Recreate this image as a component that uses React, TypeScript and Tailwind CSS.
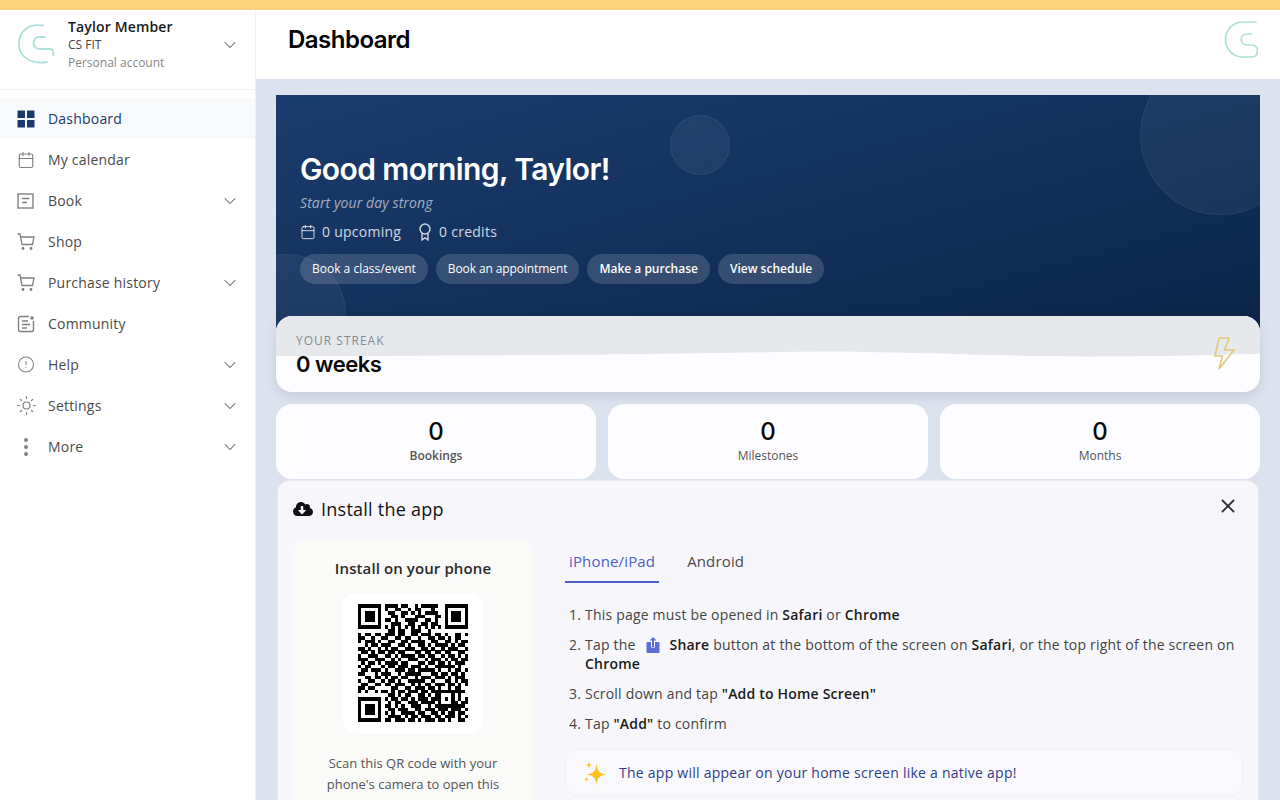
import type { ReactNode } from "react";
import { Calendar, ChevronDown, CircleAlert, EllipsisVertical, Sun, X } from "lucide-react";
import { FaCloudDownloadAlt } from "react-icons/fa";

const HEADING = "font-['Inter',sans-serif]";

function CartIcon() {
  return (
    <svg width="18" height="18" viewBox="0 0 18 18" fill="none" stroke="currentColor" strokeWidth="1.3">
      <path d="M0.500 1H3L5 11.500H15.500L17 4H3.500" />
      <circle cx="6" cy="15.500" r="0.800" fill="currentColor" />
      <circle cx="14" cy="15.500" r="0.800" fill="currentColor" />
    </svg>
  );
}

const NAV: { label: string; icon: ReactNode; chevron?: boolean; active?: boolean }[] = [
  {
    label: "Dashboard",
    active: true,
    icon: (
      <svg width="18" height="18" viewBox="0 0 18 18" fill="#1a3a6b">
        <rect x="0.500" y="0.500" width="7.500" height="7.500" rx="0.500" />
        <rect x="10" y="0.500" width="7.500" height="7.500" rx="0.500" />
        <rect x="0.500" y="10" width="7.500" height="7.500" rx="0.500" />
        <rect x="10" y="10" width="7.500" height="7.500" rx="0.500" />
      </svg>
    ),
  },
  { label: "My calendar", icon: <Calendar size={18} strokeWidth={1.5} /> },
  {
    label: "Book",
    chevron: true,
    icon: (
      <svg width="18" height="18" viewBox="0 0 18 18" fill="none" stroke="currentColor" strokeWidth="1.4">
        <rect x="1" y="2" width="15" height="14" />
        <path d="M5 6.500H12.500M5 10.500H10" />
      </svg>
    ),
  },
  { label: "Shop", icon: <CartIcon /> },
  { label: "Purchase history", chevron: true, icon: <CartIcon /> },
  {
    label: "Community",
    icon: (
      <svg width="18" height="18" viewBox="0 0 18 18" fill="none" stroke="currentColor" strokeWidth="1.4">
        <path d="M12 1.500H3.500A2 2 0 0 0 1.500 3.500V14.500A2 2 0 0 0 3.500 16.500H14.500A2 2 0 0 0 16.500 14.500V6" />
        <path d="M5 6H11M5 9.500H13M5 13H10" />
        <circle cx="15" cy="3" r="1.800" fill="currentColor" stroke="none" />
      </svg>
    ),
  },
  { label: "Help", chevron: true, icon: <CircleAlert size={19} strokeWidth={1.4} /> },
  { label: "Settings", chevron: true, icon: <Sun size={21} strokeWidth={1.4} className="shrink-0" /> },
  { label: "More", chevron: true, icon: <EllipsisVertical size={24} strokeWidth={2} className="shrink-0" /> },
];

// eyeballed from the picture, finders and the alignment block get drawn on top
const QR_ROWS = [
  "000000001111011001011111000000000",
  "000000001001100101100010000000000",
  "000000000110011010101111000000000",
  "000000000011010001110001100000000",
  "000000001101001111001101000000000",
  "000000000011100110011011000000000",
  "000000001010101010101010100000000",
  "000000000110110011100100000000000",
  "101101101110110011011101101001101",
  "110010011001101100100110110101100",
  "101110100110011011110011001101011",
  "001011011100110100110101111010110",
  "110100101011001110011010010111001",
  "011010110110110001101101101100110",
  "100111001101011110110110010110101",
  "111001110010100111001011101011011",
  "010110101111011000110110110101110",
  "101100010110111011101001111110100",
  "011011101001110110111110100101101",
  "110001011100101111100011011011010",
  "001101101011011001011101110101110",
  "100110010110100111110010001101011",
  "011001101101110010101101110110101",
  "110110000011001101110110100101100",
  "101001011010110111011011000001110",
  "000000000110101100110101000000100",
  "000000001011011010111011000000101",
  "000000000101100111011110000001011",
  "000000001101010011100101000001110",
  "000000000110111001101110111011101",
  "000000001010011110110011010110110",
  "000000000111101011011101101110101",
  "000000001101110110101110110100110",
];

function Finder({ x, y }: { x: number; y: number }) {
  return (
    <>
      <path d={`M${x} ${y}h7v7h-7zM${x + 1} ${y + 1}v5h5v-5z`} fillRule="evenodd" />
      <rect x={x + 2} y={y + 2} width="3" height="3" />
    </>
  );
}

function QrCode() {
  return (
    <svg width="110" height="118" viewBox="0 0 33 33" preserveAspectRatio="none" shapeRendering="crispEdges">
      {QR_ROWS.map((row, y) =>
        row.split("").map((c, x) => (c === "1" ? <rect key={`${x}-${y}`} x={x} y={y} width="1.02" height="1.02" /> : null)),
      )}
      <Finder x={0} y={0} />
      <Finder x={26} y={0} />
      <Finder x={0} y={26} />
      <rect x="24" y="24" width="5" height="5" fill="#000" />
      <rect x="25" y="25" width="3" height="3" fill="#fff" />
      <rect x="26" y="26" width="1" height="1" fill="#000" />
    </svg>
  );
}

function SidebarLogo() {
  return (
    <svg width="38" height="42" viewBox="0 0 38 42" fill="none" stroke="#aee1db" strokeWidth="1.800" strokeLinecap="round">
      <path d="M25 1.500C10 -1 0.900 8 0.900 20S12 41 29 38" />
      <path d="M27 13H21C14 13 13 25 22 25H32C35 25 36.500 28 35 31" />
    </svg>
  );
}

function HeaderLogo() {
  return (
    <svg width="36" height="38" viewBox="0 0 36 38" fill="none" stroke="#aee1db" strokeWidth="1.700" strokeLinecap="round">
      <path d="M32 1H19C9 1 1.500 9 1.500 18.500S9 36 19 36H28C35 36 35.500 24 28 24H23C15.500 24 15 13 23 13H27" />
    </svg>
  );
}

function Sparkles() {
  return (
    <svg width="24" height="24" viewBox="0 0 24 24" fill="#fbbf24">
      <path d="M13.500 3C14.500 10 16 12.500 23.500 13.500C16 14.500 14.500 17 13.500 24C12.500 17 11 14.500 3.500 13.500C11 12.500 12.500 10 13.500 3Z" />
      <path d="M6 0.500C6.400 3 7 3.600 9 4C7 4.400 6.400 5 6 7.500C5.600 5 5 4.400 3 4C5 3.600 5.600 3 6 0.500Z" />
      <path d="M3.500 15.500C3.800 17.500 4.200 18 6 18.300C4.200 18.600 3.800 19 3.500 21C3.200 19 2.800 18.600 1 18.300C2.800 18 3.200 17.500 3.500 15.500Z" />
    </svg>
  );
}

function Sidebar() {
  return (
    <aside className="w-[256px] shrink-0 border-r border-[#eef0f3] bg-white">
      <div className="flex h-[80px] items-center border-b border-[#f1f2f4] pb-[10px] pl-[18px] pr-[15px]">
        <SidebarLogo />
        <div className="ml-3 flex-1">
          <div className="text-sm font-semibold leading-[18px] tracking-[0.15px] text-[#1a1a1a]">Taylor Member</div>
          <div className="text-xs leading-[18px] text-[#444]">CS FIT</div>
          <div className="text-xs leading-[18px] text-[#888]">Personal account</div>
        </div>
        <ChevronDown size={20} strokeWidth={1.25} className="text-[#666]" />
      </div>
      <nav className="mt-2">
        {NAV.map((item) => (
          <div
            key={item.label}
            className={`flex h-[41px] items-center pr-[15px] ${item.active ? "bg-[#f7f9fb] text-[#1a3a6b]" : "text-[#4b4b4b]"}`}
          >
            <span className={`ml-[17px] mr-[13px] flex w-[18px] justify-center ${item.active ? "" : "text-[#808080]"}`}>
              {item.icon}
            </span>
            <span className="flex-1 text-sm tracking-[0.2px]">{item.label}</span>
            {item.chevron && <ChevronDown size={20} strokeWidth={1.25} className="text-[#666]" />}
          </div>
        ))}
      </nav>
    </aside>
  );
}

function Hero() {
  return (
    <section className="relative h-[245px] overflow-hidden bg-[linear-gradient(165deg,#1a3c6e,#0c2548)] px-6 pt-[52px] text-white">
      <div className="absolute -right-10 -top-10 size-40 rounded-full border border-white/5 bg-white/5" />
      <div className="absolute left-[394px] top-5 size-[60px] rounded-full border border-white/5 bg-white/5" />
      <div className="absolute -left-[50px] top-[159px] size-[120px] rounded-full border border-white/5 bg-white/5" />
      <div className="relative">
        <h2 className={`${HEADING} text-[30px] font-semibold leading-[44px] tracking-[-0.6px]`}>Good morning, Taylor!</h2>
        <p className="text-sm italic leading-[24px] tracking-[0.1px] text-white/60">Start your day strong</p>
        <div className="mt-[5px] flex items-center gap-4 text-sm leading-[24px] tracking-[0.25px] text-white/80">
          <span className="flex items-center gap-1.5">
            <Calendar size={16} strokeWidth={1.5} />0 upcoming
          </span>
          <span className="flex items-center gap-1.5">
            <svg width="16" height="18" viewBox="0 0 16 18" fill="none" stroke="currentColor" strokeWidth="1.400">
              <circle cx="8" cy="6" r="5" />
              <path d="M5 10.500V17L8 14.800L11 17V10.500" />
            </svg>
            0 credits
          </span>
        </div>
        <div className="mt-[10px] flex gap-2 text-xs">
          <button className="h-[30px] rounded-full bg-white/15 px-3">Book a class/event</button>
          <button className="h-[30px] rounded-full bg-white/15 px-3 tracking-[-0.1px]">Book an appointment</button>
          <button className="h-[30px] rounded-full bg-white/15 px-3 font-semibold">Make a purchase</button>
          <button className="h-[30px] rounded-full bg-white/15 px-3 font-semibold">View schedule</button>
        </div>
      </div>
    </section>
  );
}

function Streak() {
  return (
    <section className="relative z-10 -mt-6 flex h-[76px] items-center justify-between overflow-hidden rounded-2xl bg-[#fdfdff] pl-5 pr-6 shadow-[0_4px_14px_rgba(20,40,80,0.12)]">
      <svg className="absolute inset-x-0 top-0" width="984" height="42" viewBox="0 0 984 42" preserveAspectRatio="none">
        <path d="M0 0H984V38C900 40 830 41 760 40C660 38 580 34 500 36C340 39 150 40 0 40Z" fill="#e6e8ec" />
      </svg>
      <div className="relative pt-[2px]">
        <div className="text-xs leading-[18px] tracking-[1px] text-[#858b93]">YOUR STREAK</div>
        <div className={`${HEADING} text-[22px] font-semibold leading-[28px] tracking-[-0.5px] text-[#0a0a0a]`}>0 weeks</div>
      </div>
      <svg className="relative" width="22" height="34" viewBox="0 0 22 34" fill="none" stroke="#e3c878" strokeWidth="1.600">
        <path d="M5 1H15L10.700 13H20L5 32L8.400 19H1Z" />
      </svg>
    </section>
  );
}

function Stat({ label, strong }: { label: string; strong?: boolean }) {
  return (
    <div className="flex h-[75px] flex-col items-center rounded-2xl bg-[#fdfdff] pt-[11px]">
      <div className={`${HEADING} text-2xl font-medium leading-[34px] text-[#0a0a0a]`}>0</div>
      <div className={`-mt-[3px] text-xs leading-[20px] text-[#555] ${strong ? "font-semibold" : ""}`}>{label}</div>
    </div>
  );
}

function InstallCard() {
  return (
    <section className="mx-px mt-px h-[400px] rounded-t-xl border border-[#e6e8f2] bg-[#f7f7fb] px-[15px] pt-[14px]">
      <div className="flex h-[28px] items-center justify-between pr-[4px]">
        <h3 className="flex items-center gap-2 text-lg font-medium leading-[28px] tracking-[0.25px] text-[#111]">
          <FaCloudDownloadAlt size={20} />
          Install the app
        </h3>
        <X size={22} strokeWidth={2} className="mb-[6px] text-[#333]" />
      </div>
      <div className="mt-4 flex gap-8">
        <div className="h-[300px] w-[240px] shrink-0 rounded-2xl bg-[#fafaf9] px-5 pt-[17px] text-center">
          <div className="whitespace-nowrap text-[15px] font-semibold leading-[24px] tracking-[0.1px] text-[#2a2a2a]">
            Install on your phone
          </div>
          <div className="mx-auto mt-[13px] flex size-[140px] items-center justify-center rounded-xl bg-white">
            <QrCode />
          </div>
          <p className="mt-[20px] text-[13px] leading-[21px] text-[#555]">
            Scan this QR code with your phone's camera to open this page
          </p>
        </div>
        <div className="min-w-0 flex-1">
          <div className="flex gap-6 text-[15px] tracking-[0.15px]">
            <div className="h-[44px] border-b-2 border-[#4a5fc8] px-1 pt-[10px] leading-[24px] text-[#4a5fc8]">iPhone/iPad</div>
            <div className="px-1 pt-[10px] leading-[24px] text-[#4b4b4b]">Android</div>
          </div>
          <ol className="mt-[22px] list-decimal space-y-[11px] pl-5 text-sm leading-[19px] tracking-[0.2px] text-[#444]">
            <li>
              This page must be opened in <b className="font-semibold text-[#1a1a1a]">Safari</b> or{" "}
              <b className="font-semibold text-[#1a1a1a]">Chrome</b>
            </li>
            <li>
              Tap the
              <svg className="mx-[10px] inline-block align-[-3px]" width="14" height="16" viewBox="0 0 14 16" fill="#5b6fd6">
                <path d="M7 0L10.500 3.500H8V10H6V3.500H3.500Z" />
                <path d="M1.500 5H5V10.500H9V5H12.500A1 1 0 0 1 13.500 6V15A1 1 0 0 1 12.500 16H1.500A1 1 0 0 1 0.500 15V6A1 1 0 0 1 1.500 5Z" />
              </svg>
              <b className="font-semibold text-[#1a1a1a]">Share</b> button at the bottom of the screen on{" "}
              <b className="font-semibold text-[#1a1a1a]">Safari</b>, or the top right of the screen on{" "}
              <b className="font-semibold text-[#1a1a1a]">Chrome</b>
            </li>
            <li>
              Scroll down and tap <b className="font-semibold text-[#1a1a1a]">"Add to Home Screen"</b>
            </li>
            <li>
              Tap <b className="font-semibold text-[#1a1a1a]">"Add"</b> to confirm
            </li>
          </ol>
          <div className="mt-4 flex h-[47px] items-center gap-3 rounded-xl border border-[#f0f0f6] bg-[#f9f9fc] pl-[17px] text-sm tracking-[0.25px] text-[#2f3d8a]">
            <Sparkles />
            The app will appear on your home screen like a native app!
          </div>
        </div>
      </div>
    </section>
  );
}

export default function App() {
  return (
    <div className="flex h-screen flex-col overflow-hidden bg-[#dde3ee] font-['Open_Sans',sans-serif]">
      <div className="h-2.5 shrink-0 bg-[#ffd280]" />
      <div className="flex min-h-0 flex-1">
        <Sidebar />
        <main className="min-w-0 flex-1 overflow-hidden">
          <header className="flex h-[69px] items-center justify-between bg-white pb-[10px] pl-8 pr-5">
            <h1 className={`${HEADING} text-2xl font-semibold tracking-[-0.5px] text-black`}>Dashboard</h1>
            <HeaderLogo />
          </header>
          <div className="px-5 pt-4">
            <Hero />
            <Streak />
            <div className="mt-3 grid grid-cols-3 gap-3">
              <Stat label="Bookings" strong />
              <Stat label="Milestones" />
              <Stat label="Months" />
            </div>
            <InstallCard />
          </div>
        </main>
      </div>
    </div>
  );
}
